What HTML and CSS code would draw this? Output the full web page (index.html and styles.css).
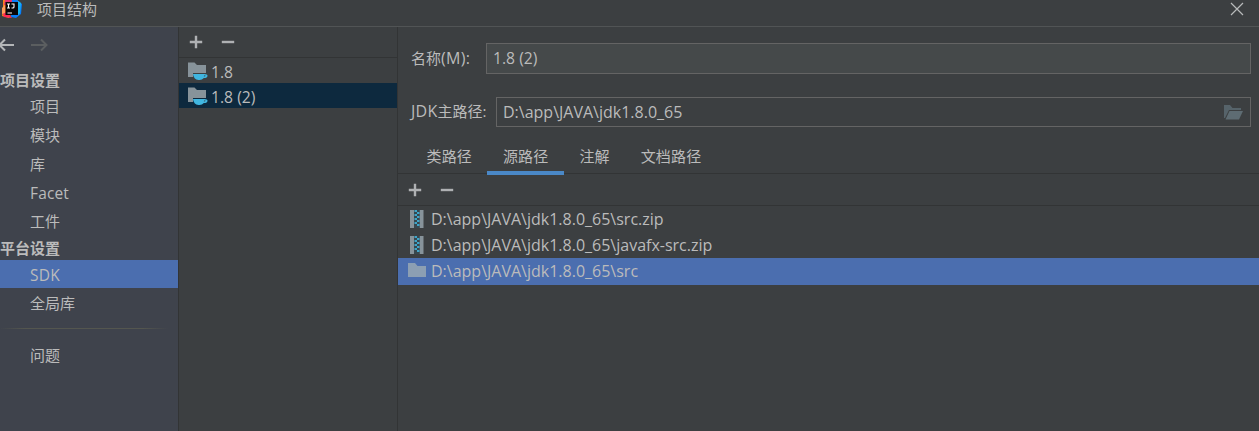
FILE: index.html
```html
<!DOCTYPE html>
<html lang="zh-CN">
<head>
<meta charset="utf-8">
<title>项目结构</title>
<link rel="stylesheet" href="styles.css">
</head>
<body>
<svg class="defs" width="0" height="0">
  <defs>
    <symbol id="plus" viewBox="0 0 14 14"><path d="M7 .8v12.4M.8 7h12.4" stroke="#afb1b3" stroke-width="2.4" fill="none"/></symbol>
    <symbol id="minus" viewBox="0 0 14 14"><path d="M.8 7h12.4" stroke="#afb1b3" stroke-width="2.4" fill="none"/></symbol>
    <symbol id="sdk" viewBox="0 0 20 18">
      <path d="M0 .5h6.500l2.500 2.500h9v8H5v4H0z" fill="#87939a"/>
      <path d="M5 12h11.500q3 0 3 1.700 0 2.300-3.700 2.300-1.600 2-4.300 2H10.500Q5.500 17.500 5 12z" fill="#40b6e0"/>
      <path d="M16 13.500h1.600q-.2 1-1.700 1z" fill="#3c3f41"/>
    </symbol>
    <symbol id="zip" viewBox="0 0 14 18">
      <path d="M0 0h4v18H0zM9.500 0h4v18h-4z" fill="#87939a"/>
      <path d="M4 0h5.500v18H4z" fill="#38474e"/>
      <path d="M4.500 1.500H7m0 2h2.500m-5 2H7m0 2h2.500m-5 2H7m0 2h2.500m-5 2H7m0 2h2.500" transform="translate(0 -.5)" stroke="#3fa5c9" stroke-width="1.800"/>
    </symbol>
  </defs>
</svg>
<div class="window">
  <header class="titlebar">
    <svg class="logo" width="22" height="20" viewBox="0 0 22 20">
      <path d="M3 0h9l2 8-5 10-7-2 1-8z" fill="#fc801d"/>
      <path d="M5 0h8v5H4z" fill="#e6326e"/>
      <path d="M12 0h5l5 4-1 10-5 4-5-1z" fill="#087cfa"/>
      <path d="M17 0l4 3-1 10-2 2V0z" fill="#18b5f0"/>
      <path d="M2 11l2 6 8 1-3-4z" fill="#fe2857"/>
      <path d="M2 8l3-3v8l-3 1z" fill="#ff9c5c"/>
      <path d="M5.500 2H18v13H5.500z" fill="#08070a"/>
      <path d="M7 4h3M8.500 4v4M7 8h3M11.500 4H14v3q0 1-1.200 1H11.500M7.500 13H12" stroke="#fff" stroke-width="1.100" fill="none"/>
    </svg>
    <span class="title">项目结构</span>
    <svg class="close" width="14" height="14" viewBox="0 0 14 14"><path d="M1 1l12 12M13 1L1 13" stroke="#b8babb" stroke-width="1.200"/></svg>
  </header>
  <div class="columns">
    <nav class="sidebar">
      <div class="history">
        <svg width="14" height="14" viewBox="0 0 14 14"><path d="M14 7H0M5 1.500L-.5 7 5 12.500" stroke="#b4b6b8" stroke-width="2" fill="none"/></svg>
        <svg width="17" height="14" viewBox="0 0 17 14"><path d="M0 7h15.500M10 1.500L15.500 7 10 12.500" stroke="#5b5e60" stroke-width="2" fill="none"/></svg>
      </div>
      <h2 class="group">项目设置</h2>
      <a class="entry">项目</a>
      <a class="entry">模块</a>
      <a class="entry">库</a>
      <a class="entry facet">Facet</a>
      <a class="entry artifacts">工件</a>
      <h2 class="group platform">平台设置</h2>
      <a class="entry chosen">SDK</a>
      <a class="entry libs">全局库</a>
      <div class="rule"></div>
      <a class="entry">问题</a>
    </nav>
    <section class="sdks">
      <div class="tools"><svg width="14" height="14"><use href="#plus"/></svg><svg width="14" height="14"><use href="#minus"/></svg></div>
      <div class="sdk"><svg width="20" height="18"><use href="#sdk"/></svg><span class="version">1.8</span></div>
      <div class="sdk current"><svg width="20" height="18"><use href="#sdk"/></svg><span class="version">1.8 (2)</span></div>
    </section>
    <main class="details">
      <div class="field name"><label>名称<span class="latin">(M):</span></label><div class="input filled"><span class="version">1.8 (2)</span></div></div>
      <div class="field home"><label><span class="latin">JDK</span>主路径:</label><div class="input"><span class="path">D:\app\JAVA\jdk1.8.0_65</span>
        <svg width="19" height="15" viewBox="0 0 19 15"><path d="M0 0h6l2.500 3H17v2H5L1 13H0z" fill="#56636a"/><path d="M5.500 6H19l-4 8.500H1.500z" fill="#5e6c73"/></svg></div></div>
      <div class="tabs"><span class="tab">类路径</span><span class="tab active">源路径</span><span class="tab">注解</span><span class="tab">文档路径</span></div>
      <div class="tools"><svg width="14" height="14"><use href="#plus"/></svg><svg width="14" height="14"><use href="#minus"/></svg></div>
      <div class="source"><svg width="18" height="18"><use href="#zip"/></svg><span class="path">D:\app\JAVA\jdk1.8.0_65\src.zip</span></div>
      <div class="source"><svg width="18" height="18"><use href="#zip"/></svg><span class="path">D:\app\JAVA\jdk1.8.0_65\javafx-src.zip</span></div>
      <div class="source selected"><svg width="18" height="18" viewBox="0 0 18 18"><path d="M0 1h7l2.500 3H18v11H0z" fill="#8c9fb3"/></svg><span class="path">D:\app\JAVA\jdk1.8.0_65\src</span></div>
    </main>
  </div>
</div>
</body>
</html>
```
FILE: styles.css
```css
* { box-sizing: border-box; }
body { margin: 0; background: #3c3f41; color: #bbb; font: 15px "Open Sans", "Noto Sans CJK SC", sans-serif; overflow: hidden; }
svg { display: block; flex: none; }
.defs { position: absolute; }
.window { height: 431px; display: flex; flex-direction: column; }
.titlebar { height: 27px; flex: none; display: flex; align-items: flex-start; border-bottom: 1px solid #515455; }
.logo { margin-right: 15px; }
.title { flex: 1; line-height: 19px; }
.close { margin: 2px 15px 0 0; }
.columns { flex: 1; min-height: 0; display: grid; grid-template-columns: 179px 219px 1fr; }
.sidebar { background: #3f434c; border-right: 1px solid #323435; display: flex; flex-direction: column; }
.history { height: 44px; display: flex; gap: 17px; padding-top: 11px; }
.group { margin: 0; font-size: 15px; font-weight: 700; height: 21px; line-height: 18px; }
.group.platform { height: 23px; line-height: 23px; }
.entry { height: 29px; line-height: 28px; padding-left: 30px; }
.entry.facet { font-size: 15.5px; letter-spacing: .15px; line-height: 29px; }
.entry.artifacts { line-height: 26px; }
.entry.chosen { height: 28px; line-height: 30px; font-size: 15.5px; letter-spacing: .2px; background: #4b6eaf; }
.entry.libs { height: 30px; line-height: 30px; }
.rule { height: 1px; margin: 10px 10px 12px 0; background: linear-gradient(90deg, transparent, #54564f 15%, #54564f 85%, transparent); }
.sdks { border-right: 1px solid #323435; }
.tools { height: 31px; display: flex; align-items: center; gap: 18px; padding-left: 10px; border-bottom: 1px solid #323435; }
.sdk { height: 25px; display: flex; align-items: center; gap: 3px; padding-left: 9px; }
.sdk .version { padding-top: 2px; }
.sdk.current { background: #0d293e; }
.version { font-size: 15.7px; line-height: 20px; }
.latin { font-size: 16px; letter-spacing: .3px; }
.path { font-size: 16px; line-height: 20px; }
.details { padding-top: 16px; }
.field { display: flex; align-items: center; padding: 0 8px 0 13px; }
.field label { flex: none; width: 75px; line-height: 20px; padding-bottom: 2px; white-space: nowrap; }
.home label { width: 85px; }
.input { flex: 1; height: 30px; display: flex; align-items: center; justify-content: space-between; padding: 0 7px 0 6px; border: 1px solid #646464; }
.input .version, .input .path { padding-bottom: 1px; }
.name .input { height: 31px; }
.filled { background: #45494a; }
.home { margin-top: 23px; }
.tabs { height: 47px; padding: 11px 0 0 13px; display: flex; border-bottom: 1px solid #323435; }
.tab { height: 37px; line-height: 37px; padding: 0 15.500px; letter-spacing: .15px; }
.active { border-bottom: 4px solid #4a88c7; }
.details .tools { height: 32px; }
.source { height: 26px; display: flex; align-items: center; gap: 5px; padding-left: 10px; }
.source.selected { height: 27px; padding-bottom: 1px; background: #4b6eaf; }
```
